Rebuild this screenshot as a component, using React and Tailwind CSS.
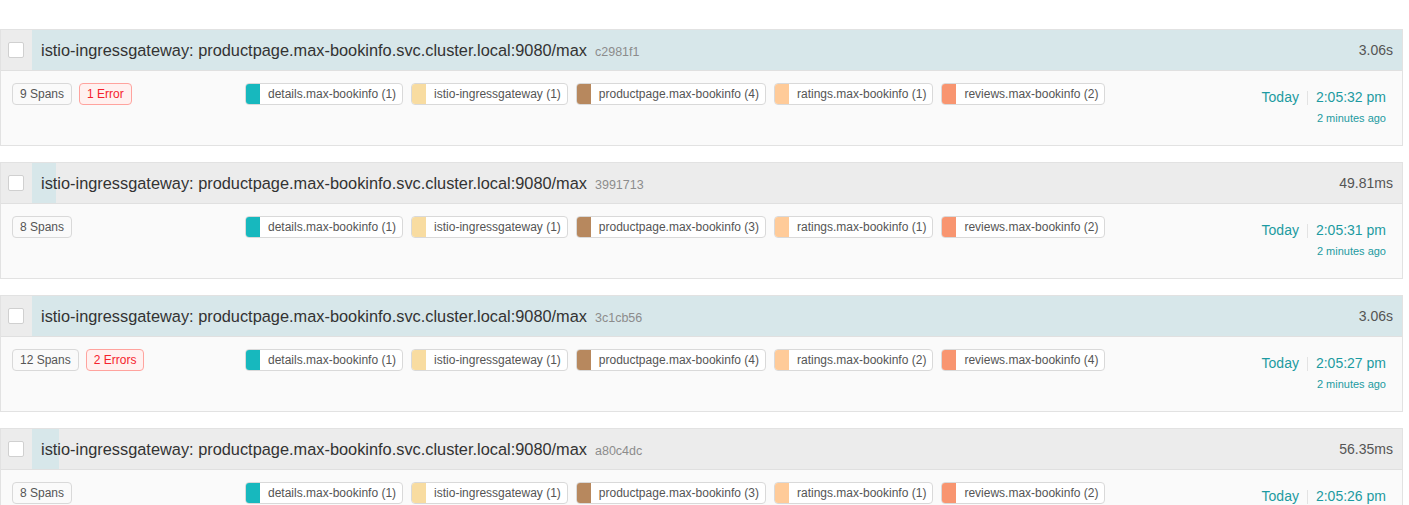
const services = [
  { name: "details.max-bookinfo", color: "#17b8be" },
  { name: "istio-ingressgateway", color: "#f8dca1" },
  { name: "productpage.max-bookinfo", color: "#b7885e" },
  { name: "ratings.max-bookinfo", color: "#ffcb99" },
  { name: "reviews.max-bookinfo", color: "#f89570" },
];

const traces = [
  { id: "c2981f1", duration: "3.06s", bar: 100, spans: 9, errors: 1, counts: [1, 1, 4, 1, 2], time: "2:05:32 pm" },
  { id: "3991713", duration: "49.81ms", bar: 1.75, spans: 8, errors: 0, counts: [1, 1, 3, 1, 2], time: "2:05:31 pm" },
  { id: "3c1cb56", duration: "3.06s", bar: 100, spans: 12, errors: 2, counts: [1, 1, 4, 2, 4], time: "2:05:27 pm" },
  { id: "a80c4dc", duration: "56.35ms", bar: 1.97, spans: 8, errors: 0, counts: [1, 1, 3, 1, 2], time: "2:05:26 pm" },
];

function TraceCard({ trace }) {
  return (
    <div className="w-[1403px] border border-[#e2e2e2] bg-[#fafafa]">
      {/* header */}
      <div className="relative flex h-[41px] items-center bg-[#ececec] border-b border-[#e0e0e0]">
        <div
          className="absolute top-0 bottom-0 left-[31px] max-w-[calc(100%-31px)] bg-[#d7e7ea]"
          style={{ width: `calc((100% - 31px) * ${trace.bar / 100})` }}
        />
        <div className="relative w-[31px] flex pl-[7px]">
          <div className="w-[16px] h-[16px] bg-white border border-[#d0d0d0] rounded-[2px]" />
        </div>
        <div className="relative flex-1 flex items-baseline pl-[9px]">
          <span className="text-[16.35px] text-[#333]">
            istio-ingressgateway: productpage.max-bookinfo.svc.cluster.local:9080/max
          </span>
          <span className="ml-[8px] text-[12.5px] text-[#8c8c8c]">{trace.id}</span>
        </div>
        <div className="relative pr-[9px] text-[14px] text-[#555]">{trace.duration}</div>
      </div>

      {/* body */}
      <div className="flex h-[74px] items-start pt-[12px] pl-[11px] pr-[16px]">
        <div className="w-[233px] flex gap-[7px]">
          <span className="h-[22px] px-[7px] flex items-center rounded-[4px] border border-[#d9d9d9] bg-[#fafafa] text-[12px] text-[#555]">
            {trace.spans} Spans
          </span>
          {trace.errors > 0 && (
            <span className="h-[22px] px-[7px] flex items-center rounded-[4px] border border-[#ffa39e] bg-[#fff1f0] text-[12px] text-[#f5222d]">
              {trace.errors} {trace.errors > 1 ? "Errors" : "Error"}
            </span>
          )}
        </div>
        <div className="flex-1 flex gap-[8px]">
          {services.map((s, i) => (
            <span
              key={s.name}
              className="h-[22px] flex items-stretch rounded-[4px] border border-[#d9d9d9] bg-white overflow-hidden"
            >
              <span className="w-[14px]" style={{ backgroundColor: s.color }} />
              <span className="flex items-center pl-[8px] pr-[6px] text-[12px] text-[#555]">
                {s.name} ({trace.counts[i]})
              </span>
            </span>
          ))}
        </div>
        <div className="flex flex-col items-end text-[#1d9aa1]">
          <div className="flex items-center h-[22px] pt-[7px] text-[14px]">
            <span>Today</span>
            <span className="mx-[8px] h-[14px] w-px bg-[#e3e3e3]" />
            <span>{trace.time}</span>
          </div>
          <div className="mt-[5px] text-[11px]">2 minutes ago</div>
        </div>
      </div>
    </div>
  );
}

export default function App() {
  return (
    <div
      className="w-[1409px] h-[505px] overflow-hidden bg-white pt-[29px] flex flex-col gap-[16px]"
      style={{ fontFamily: '"Liberation Sans", Arial, sans-serif' }}
    >
      {traces.map((t) => (
        <TraceCard key={t.id} trace={t} />
      ))}
    </div>
  );
}
